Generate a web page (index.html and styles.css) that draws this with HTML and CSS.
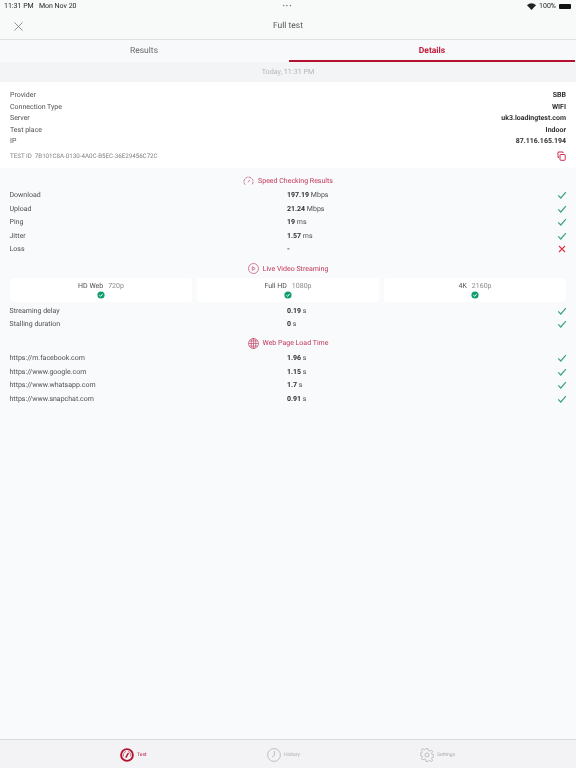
FILE: index.html
```html
<!DOCTYPE html>
<html lang="en">
<head>
  <meta charset="UTF-8" />
  <meta name="viewport" content="width=device-width, initial-scale=1.0"/>
  <title>Full test</title>
  <link rel="stylesheet" href="styles.css">
</head>
<body>
  <svg class="defs" width="0" height="0">
    <symbol id="ok" viewBox="0 0 10 10"><path d="M1.2 5.4L3.8 8 8.9 2.2" fill="none" stroke="#3aa57c" stroke-width="1.2"/></symbol>
    <symbol id="badge" viewBox="0 0 8 8"><circle cx="4" cy="4" r="3.6" fill="#0f9d6b"/><path d="M2.3 4.1L3.6 5.3 5.7 2.9" fill="none" stroke="#fff" stroke-width="1"/></symbol>
  </svg>

  <div class="top">
    <div class="status">
      <span class="status-time">11:31 PM&nbsp;&nbsp; Mon Nov 20</span>
      <span class="status-dots">•••</span>
      <span class="status-right">
        <svg width="9" height="7" viewBox="0 0 18 14"><path d="M9 14L0 4.5C5 -1 13 -1 18 4.5z" fill="#222"/></svg>
        100%
        <span class="battery"></span>
      </span>
    </div>
    <div class="nav">
      <svg class="close" width="9" height="9" viewBox="0 0 9 9"><path d="M.5.5l8 8M8.5.5l-8 8" stroke="#666" stroke-width=".7"/></svg>
      <span>Full test</span>
    </div>
  </div>

  <div class="tabs">
    <div class="tab">Results</div>
    <div class="tab active">Details</div>
  </div>
  <div class="date">Today, 11:31 PM</div>

  <div class="info">
    <div class="info-row"><span>Provider</span><b>SBB</b></div>
    <div class="info-row"><span>Connection Type</span><b>WIFI</b></div>
    <div class="info-row"><span>Server</span><b>uk3.loadingtest.com</b></div>
    <div class="info-row"><span>Test place</span><b>Indoor</b></div>
    <div class="info-row"><span>IP</span><b>87.116.165.194</b></div>
    <div class="test-id">
      <span>TEST ID&nbsp; 7B101C8A-0130-4A0C-B5EC-36E29456C72C</span>
      <svg width="9" height="10" viewBox="0 0 9 10" fill="none" stroke="#c2183a" stroke-width=".9"><path d="M2 6.5H1V1h5v1"/><rect x="3" y="3.5" width="5.2" height="5.8" rx=".8"/></svg>
    </div>
  </div>

  <div class="heading">
    <svg width="11" height="10" viewBox="0 0 12 10" fill="none" stroke="#c2476a" stroke-width=".8"><path d="M2.4 9.2A5 5 0 1 1 9.6 9.2" stroke-dasharray="3 .8"/><path d="M5.4 6.4L7.4 4"/></svg>
    Speed Checking Results
  </div>
  <div class="row"><span>Download</span><span><b>197.19</b> Mbps</span><svg class="mark"><use href="#ok"/></svg></div>
  <div class="row"><span>Upload</span><span><b>21.24</b> Mbps</span><svg class="mark"><use href="#ok"/></svg></div>
  <div class="row"><span>Ping</span><span><b>19</b> ms</span><svg class="mark"><use href="#ok"/></svg></div>
  <div class="row"><span>Jitter</span><span><b>1.57</b> ms</span><svg class="mark"><use href="#ok"/></svg></div>
  <div class="row"><span>Loss</span><span><b>-</b></span><svg class="mark" viewBox="0 0 10 10"><path d="M2 2l6 6M8 2l-6 6" stroke="#e2323f" stroke-width="1.1"/></svg></div>

  <div class="heading">
    <svg width="11" height="11" viewBox="0 0 11 11" fill="none" stroke="#c2476a" stroke-width=".7"><circle cx="5.5" cy="5.5" r="5"/><path d="M4.3 3.6L7.2 5.5 4.3 7.4z"/></svg>
    Live Video Streaming
  </div>
  <div class="cards">
    <div class="card"><div class="card-title"><span>HD Web</span><span class="res">720p</span></div><svg class="badge"><use href="#badge"/></svg></div>
    <div class="card"><div class="card-title"><span>Full HD</span><span class="res">1080p</span></div><svg class="badge"><use href="#badge"/></svg></div>
    <div class="card"><div class="card-title"><span>4K</span><span class="res">2160p</span></div><svg class="badge"><use href="#badge"/></svg></div>
  </div>
  <div class="row"><span>Streaming delay</span><span><b>0.19</b> s</span><svg class="mark"><use href="#ok"/></svg></div>
  <div class="row"><span>Stalling duration</span><span><b>0</b> s</span><svg class="mark"><use href="#ok"/></svg></div>

  <div class="heading">
    <svg width="11" height="11" viewBox="0 0 11 11" fill="none" stroke="#c2476a" stroke-width=".7"><circle cx="5.5" cy="5.5" r="5"/><ellipse cx="5.5" cy="5.5" rx="2.3" ry="5"/><path d="M5.5.5v10M.5 5.5h10M1.2 3h8.6M1.2 8h8.6"/></svg>
    Web Page Load Time
  </div>
  <div class="row"><span>https://m.facebook.com</span><span><b>1.96</b> s</span><svg class="mark"><use href="#ok"/></svg></div>
  <div class="row"><span>https://www.google.com</span><span><b>1.15</b> s</span><svg class="mark"><use href="#ok"/></svg></div>
  <div class="row"><span>https://www.whatsapp.com</span><span><b>1.7</b> s</span><svg class="mark"><use href="#ok"/></svg></div>
  <div class="row"><span>https://www.snapchat.com</span><span><b>0.91</b> s</span><svg class="mark"><use href="#ok"/></svg></div>

  <div class="tabbar">
    <div class="tabbar-item current">
      <svg width="14" height="14" viewBox="0 0 14 14" fill="none" stroke="#b5102e"><circle cx="7" cy="7" r="5.9" stroke-width="1.9"/><path d="M5.8 9.6L8.4 5" stroke-width="1.5"/><path d="M3.5 8.4A3.8 3.8 0 0 1 6.2 3.4M8 3.4A3.8 3.8 0 0 1 10.5 8.4" stroke-width=".6"/></svg>
      Test
    </div>
    <div class="tabbar-item">
      <svg width="14" height="14" viewBox="0 0 14 14" fill="none" stroke="#a9a9ae" stroke-width=".7"><circle cx="7" cy="7" r="6.4"/><path d="M7.4 3v4.4L5 9"/></svg>
      History
    </div>
    <div class="tabbar-item">
      <svg width="14" height="14" viewBox="0 0 14 14" fill="none" stroke="#a9a9ae" stroke-width=".7"><circle cx="7" cy="7" r="2"/><path d="M6 .6h2l.4 1.9 1.3.6 1.7-1 1.3 1.5-1.1 1.6.5 1.3 1.9.4v2l-1.9.4-.5 1.3 1.1 1.6-1.3 1.3-1.7-1-1.3.5L8 13.4H6l-.4-1.9-1.3-.5-1.7 1-1.3-1.3 1.1-1.6-.5-1.3-1.9-.4v-2l1.9-.4.5-1.3-1.1-1.6 1.3-1.5 1.7 1 1.3-.6z"/></svg>
      Settings
    </div>
  </div>
</body>
</html>
```

FILE: styles.css
```css
* { box-sizing: border-box; }

body {
  font-family: Roboto, "Liberation Sans", sans-serif;
  font-size: 7px;
  text-rendering: geometricPrecision;
  will-change: transform;
  margin: 0;
  height: 768px;
  background: #f9fafc;
  color: #505050;
  display: flex;
  flex-direction: column;
  overflow: hidden;
}

b {
  color: #303030;
  font-weight: 700;
}

.defs { position: absolute; }

.top {
  background: #f8f9f9;
  border-bottom: 1px solid #dfe1e3;
  height: 40px;
}

.status {
  height: 12px;
  padding: 0 5px 0 4px;
  display: grid;
  grid-template-columns: 1fr auto 1fr;
  align-items: center;
  color: #222;
  font-size: 7px;
}

.status-dots {
  color: #777;
  font-size: 7px;
  letter-spacing: 1px;
}

.status-right {
  display: flex;
  justify-content: flex-end;
  align-items: center;
  gap: 3px;
}

.battery {
  width: 12px;
  height: 5px;
  background: #111;
  border-radius: 1px;
}

.nav {
  height: 27px;
  padding: 1px 14px 0;
  display: grid;
  grid-template-columns: 1fr auto 1fr;
  align-items: center;
  font-size: 8.5px;
  color: #555;
}

.tabs {
  height: 22px;
  display: grid;
  grid-template-columns: 1fr 1fr;
  background: #f8f9fa;
}

.tab {
  display: flex;
  align-items: center;
  justify-content: center;
  font-size: 8.5px;
  color: #666;
}

.tab.active {
  color: #c2183a;
  font-weight: 700;
  border-bottom: 2px solid #b5102e;
  margin: 0 1px;
  padding-top: 2px;
}

.date {
  height: 20px;
  background: #f2f4f6;
  color: #b4b6b9;
  font-size: 7.2px;
  padding-bottom: 1px;
  display: flex;
  align-items: center;
  justify-content: center;
}

.info {
  background: #fff;
  height: 86px;
  padding: 7.5px 10px 0;
}

.info-row {
  height: 11.5px;
  display: flex;
  justify-content: space-between;
  align-items: center;
}

.test-id {
  display: flex;
  justify-content: space-between;
  align-items: center;
  margin-top: 3px;
  height: 12px;
  font-size: 6.2px;
  color: #808080;
}

.heading {
  height: 14px;
  margin: 5.5px 0 1px;
  display: flex;
  align-items: center;
  justify-content: center;
  gap: 4px;
  color: #c2385a;
}

.row {
  height: 13.5px;
  padding: 0 9.5px;
  display: grid;
  grid-template-columns: 277.5px 1fr 10px;
  align-items: center;
}

.mark {
  width: 10px;
  height: 10px;
}

.cards {
  display: grid;
  grid-template-columns: repeat(3, 1fr);
  gap: 5px;
  padding: 0 10px;
  margin: 1.5px 0 1.75px;
}

.card {
  background: #fff;
  border-radius: 3px;
  height: 24px;
  display: flex;
  flex-direction: column;
  align-items: center;
  padding-top: 3px;
  gap: 1px;
}

.card-title {
  display: flex;
  gap: 5px;
  height: 9px;
  align-items: center;
}

.res { color: #888; }

.badge {
  width: 8px;
  height: 8px;
}

.tabbar {
  margin-top: auto;
  height: 29px;
  background: #f3f3f6;
  border-top: 1px solid #d9dadd;
  display: grid;
  grid-template-columns: 147px 153px auto;
  align-items: center;
  padding: 1px 0 0 120px;
  font-size: 5px;
  color: #a9a9ae;
}

.tabbar-item {
  display: flex;
  align-items: center;
  gap: 3px;
}

.tabbar-item.current { color: #b5102e; }
```
